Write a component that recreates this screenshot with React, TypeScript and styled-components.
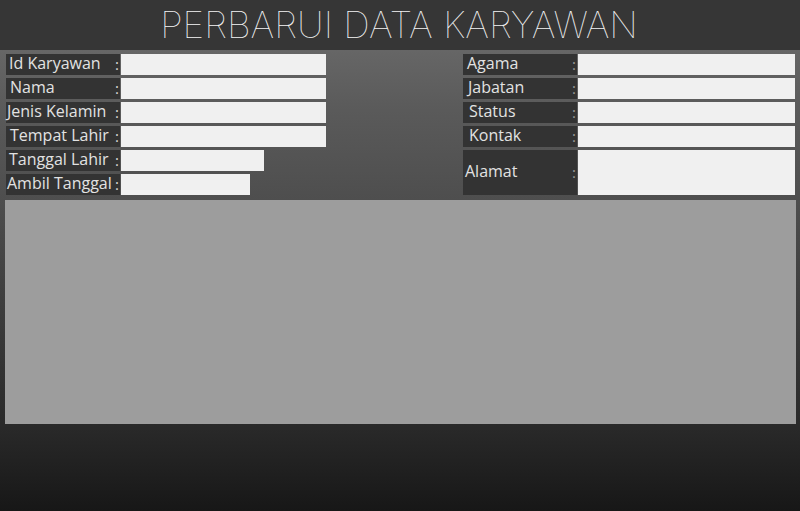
import React from "react";
import styled, { createGlobalStyle } from "styled-components";

const Global = createGlobalStyle`
  html, body { margin: 0; padding: 0; }
  body {
    width: 800px;
    height: 511px;
    overflow: hidden;
    background: linear-gradient(to bottom, #363636 0px, #363636 50px, #666666 50px, #5a5a5a 110px, #4e4e4e 200px, #2a2a2a 424px, #171717 511px);
    font-family: "Open Sans", "Noto Sans", sans-serif;
  }
`;

const Page = styled.div`
  width: 800px;
  height: 511px;
  display: flex;
  flex-direction: column;
`;

const Header = styled.header`
  height: 50px;
  background: #363636;
  display: flex;
  align-items: center;
  justify-content: center;
`;

const Title = styled.h1`
  margin: 0;
  padding-bottom: 2px;
  padding-right: 2px;
  font-family: Inter, "Liberation Sans", sans-serif;
  font-weight: 100;
  font-size: 37px;
  letter-spacing: 0px;
  color: #f4f4f4;
  line-height: 1;
`;

const FormArea = styled.section`
  display: flex;
  justify-content: space-between;
  align-items: flex-start;
  padding: 4px 5px 0 6px;
`;

const Column = styled.div<{ $labelW: number; $inputW: number }>`
  display: grid;
  grid-template-columns: ${(p) => p.$labelW}px ${(p) => p.$inputW}px;
  grid-auto-rows: 21px;
  row-gap: 3px;
  column-gap: 1px;
`;

const Label = styled.div<{ $pad: number; $span?: number }>`
  grid-row: span ${(p) => p.$span ?? 1};
  background: #333333;
  color: #e2e2e2;
  font-size: 16px;
  line-height: 1.2;
  display: flex;
  align-items: center;
  justify-content: space-between;
  padding-left: ${(p) => p.$pad}px;
  padding-right: 1px;
  padding-bottom: 2px;
  white-space: nowrap;
  box-sizing: border-box;
`;

const Colon = styled.span<{ $dim?: boolean }>`
  color: ${(p) => (p.$dim ? "#9a9a9a" : "#d8d8d8")};
  font-size: 15px;
`;

const Input = styled.div<{ $w?: number; $span?: number }>`
  grid-row: span ${(p) => p.$span ?? 1};
  background: #f0f0f0;
  width: ${(p) => (p.$w ? `${p.$w}px` : "auto")};
`;

const TablePanel = styled.div`
  margin: 5px 4px 0 5px;
  height: 224px;
  background: #9d9d9d;
`;

type Field = { label: string; pad: number; w?: number; span?: number };

const leftFields: Field[] = [
  { label: "Id Karyawan", pad: 3 },
  { label: "Nama", pad: 4 },
  { label: "Jenis Kelamin", pad: 1 },
  { label: "Tempat Lahir", pad: 4 },
  { label: "Tanggal Lahir", pad: 3, w: 143 },
  { label: "Ambil Tanggal", pad: 1, w: 129 },
];

const rightFields: Field[] = [
  { label: "Agama", pad: 4 },
  { label: "Jabatan", pad: 5 },
  { label: "Status", pad: 6 },
  { label: "Kontak", pad: 6 },
  { label: "Alamat", pad: 2, span: 2 },
];

export default function App() {
  return (
    <>
      <Global />
      <Page>
        <Header>
          <Title>PERBARUI DATA KARYAWAN</Title>
        </Header>
        <FormArea>
          <Column $labelW={114} $inputW={205}>
            {leftFields.map((f) => (
              <React.Fragment key={f.label}>
                <Label $pad={f.pad}>
                  <span>{f.label}</span>
                  <Colon>:</Colon>
                </Label>
                <Input $w={f.w} />
              </React.Fragment>
            ))}
          </Column>
          <Column $labelW={114} $inputW={217}>
            {rightFields.map((f) => (
              <React.Fragment key={f.label}>
                <Label $pad={f.pad} $span={f.span}>
                  <span>{f.label}</span>
                  <Colon $dim>:</Colon>
                </Label>
                <Input $span={f.span} />
              </React.Fragment>
            ))}
          </Column>
        </FormArea>
        <TablePanel />
      </Page>
    </>
  );
}
